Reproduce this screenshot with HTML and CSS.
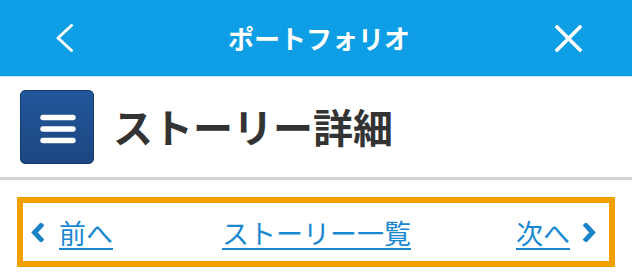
FILE: index.html
```html
<!DOCTYPE html>
<html lang="ja">
<head>
<meta charset="utf-8">
<title>ストーリー詳細</title>
<link rel="stylesheet" href="styles.css">
</head>
<body>
<header class="topbar">
  <a class="topbar-btn back" href="#" aria-label="戻る">
    <svg width="17" height="28" viewBox="0 0 17 28"><polyline points="15.5,1.5 2,14 15.5,26.5" fill="none" stroke="#fff" stroke-width="3" stroke-linecap="round" stroke-linejoin="round"/></svg>
  </a>
  <h1 class="topbar-title">ポートフォリオ</h1>
  <a class="topbar-btn close" href="#" aria-label="閉じる">
    <svg width="27" height="27" viewBox="0 0 27 27"><path d="M2 2 L25 25 M25 2 L2 25" fill="none" stroke="#fff" stroke-width="3.6" stroke-linecap="square"/></svg>
  </a>
</header>
<section class="page-head">
  <div class="menu-icon">
    <svg width="36" height="30" viewBox="0 0 36 30"><g stroke="#fff" stroke-width="5.4" stroke-linecap="round"><line x1="3" y1="3.5" x2="33" y2="3.5"/><line x1="3" y1="15" x2="33" y2="15"/><line x1="3" y1="26.5" x2="33" y2="26.5"/></g></svg>
  </div>
  <h2 class="page-title">ストーリー詳細</h2>
</section>
<hr class="divider">
<nav class="pager">
  <a class="pager-link prev" href="#">
    <svg class="chev" width="13" height="19" viewBox="0 0 13 19"><polyline points="10,2.5 3.5,9.5 10,16.5" fill="none" stroke="#1a82c6" stroke-width="4.8" stroke-linecap="square" stroke-linejoin="miter"/></svg>
    <span class="pager-text">前へ</span>
  </a>
  <a class="pager-link list" href="#"><span class="pager-text">ストーリー一覧</span></a>
  <a class="pager-link next" href="#">
    <span class="pager-text">次へ</span>
    <svg class="chev" width="13" height="19" viewBox="0 0 13 19"><polyline points="3,2.5 9.5,9.5 3,16.5" fill="none" stroke="#1a82c6" stroke-width="4.8" stroke-linecap="square" stroke-linejoin="miter"/></svg>
  </a>
</nav>
</body>
</html>
```
FILE: styles.css
```css
* { box-sizing: border-box; }
html, body { margin: 0; padding: 0; background: #fff; }
body {
  width: 632px;
  font-family: "Noto Sans CJK JP", "Noto Sans", sans-serif;
  color: #333;
}
.topbar {
  height: 77px;
  background: #0d9ee5;
  border-bottom: 1px solid #cfe6f4;
  display: flex;
  align-items: center;
  justify-content: space-between;
  padding: 0 50px 0 56px;
}
.topbar-btn { display: flex; align-items: center; }
.topbar-btn.back { width: 27px; }
.topbar-title {
  margin: 0;
  font-size: 26px;
  font-weight: 700;
  color: #fff;
  line-height: 1;
  padding-bottom: 1px;
}
.page-head {
  display: flex;
  align-items: center;
  gap: 19px;
  padding: 13px 20px;
  height: 100px;
}
.menu-icon {
  width: 74px;
  height: 74px;
  border-radius: 5px;
  background: linear-gradient(#21579a, #1d4682);
  border: 1px solid #163a6c;
  display: flex;
  align-items: center;
  justify-content: center;
  padding-left: 1px;
  padding-top: 3px;
}
.page-title {
  margin: 0;
  font-size: 40px;
  font-weight: 700;
  color: #333;
  line-height: 1;
  padding-bottom: 2px;
}
.divider {
  margin: 0;
  border: 0;
  height: 3px;
  background: #d2d2d2;
}
.pager {
  margin: 17px 17px 0;
  height: 70px;
  border: 6px solid #f2a000;
  display: flex;
  align-items: center;
  justify-content: space-between;
  padding: 0 13px 0 8px;
}
.pager-link {
  display: flex;
  align-items: center;
  gap: 15px;
  color: #1a88d0;
  text-decoration: none;
}
.pager-link.next { gap: 13px; }
.pager-link.list { margin-left: 4px; }
.pager-text {
  font-size: 27px;
  line-height: 1;
  text-decoration: underline;
  text-decoration-thickness: 2px;
  text-underline-offset: 4px;
}
.chev { display: block; }
```
